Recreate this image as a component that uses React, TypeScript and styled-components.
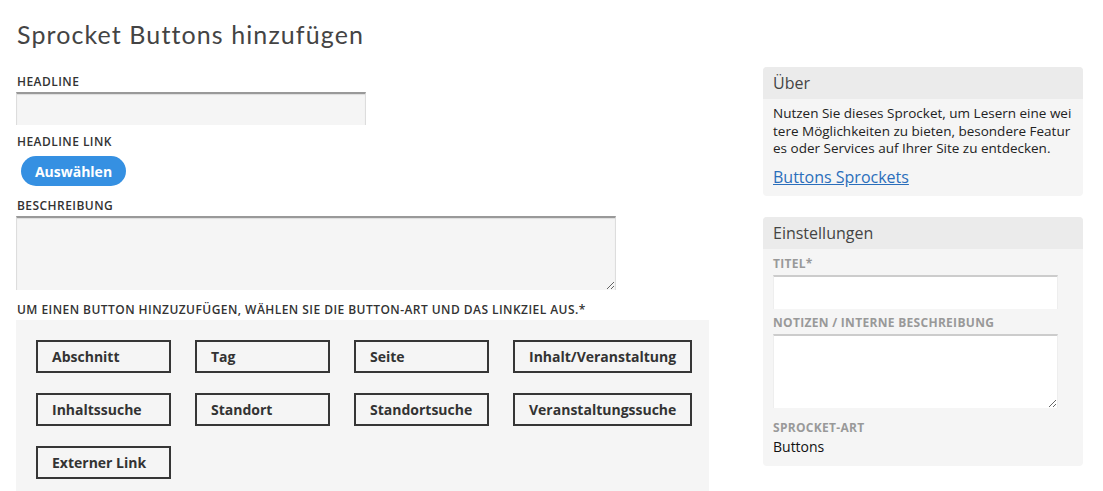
import React from 'react';
import styled, { createGlobalStyle } from 'styled-components';

const GlobalStyle = createGlobalStyle`
  body {
    margin: 0;
    background: #fff;
    font-family: "Open Sans", "Liberation Sans", sans-serif;
    color: #333;
  }
`;

const buttonTypes = [
  'Abschnitt',
  'Tag',
  'Seite',
  'Inhalt/Veranstaltung',
  'Inhaltssuche',
  'Standort',
  'Standortsuche',
  'Veranstaltungssuche',
  'Externer Link',
];

const App = () => {
  return (
    <Page>
      <GlobalStyle />
      <Title>Sprocket Buttons hinzufügen</Title>

      <Columns>
        {/* Formular links */}
        <Main>
          <Label>Headline</Label>
          <TextInput type="text" />

          <Label style={{ marginTop: 9 }}>Headline Link</Label>
          <PickButton>Auswählen</PickButton>

          <Label style={{ marginTop: 12 }}>Beschreibung</Label>
          <TextArea />

          <Label style={{ marginTop: 12 }}>
            Um einen Button hinzuzufügen, wählen Sie die Button-Art und das Linkziel aus.*
          </Label>
          <TypePanel>
            {buttonTypes.map((t) => (
              <TypeButton key={t}>{t}</TypeButton>
            ))}
          </TypePanel>
        </Main>

        {/* Seitenleiste */}
        <Sidebar>
          <Card>
            <CardHeader>Über</CardHeader>
            <CardBody>
              <About>
                Nutzen Sie dieses Sprocket, um Lesern eine weitere Möglichkeiten zu bieten,
                besondere Features oder Services auf Ihrer Site zu entdecken.
              </About>
              <DocLink href="#">Buttons Sprockets</DocLink>
            </CardBody>
          </Card>

          <Card>
            <CardHeader>Einstellungen</CardHeader>
            <SettingsBody>
              <SideLabel>Titel*</SideLabel>
              <SideInput type="text" />
              <SideLabel style={{ marginTop: 6 }}>Notizen / interne Beschreibung</SideLabel>
              <SideTextArea />
              <SideLabel style={{ marginTop: 12, marginBottom: 1 }}>Sprocket-Art</SideLabel>
              <Value>Buttons</Value>
            </SettingsBody>
          </Card>
        </Sidebar>
      </Columns>
    </Page>
  );
};

// 전체 페이지
const Page = styled.div`
  padding: 19px 0 0 16px;
  height: 491px;
  box-sizing: border-box;
  overflow: hidden;
`;

const Title = styled.h1`
  margin: 0 0 18px 1px;
  font-family: Lato, "Liberation Sans", sans-serif;
  font-weight: 400;
  font-size: 25px;
  line-height: 30px;
  color: #444;
  letter-spacing: 1.1px;
`;

const Columns = styled.div`
  display: flex;
  align-items: flex-start;
  gap: 54px;
`;

const Main = styled.div`
  width: 693px;
  display: flex;
  flex-direction: column;
  align-items: flex-start;
  padding-top: 7px;
`;

const Label = styled.div`
  font-size: 12px;
  font-weight: 600;
  line-height: 16px;
  letter-spacing: 0.45px;
  text-transform: uppercase;
  color: #333;
  margin-left: 1px;
  margin-bottom: 2px;
`;

const TextInput = styled.input`
  width: 350px;
  height: 33px;
  box-sizing: border-box;
  background: #f5f5f5;
  border: 1px solid #ddd;
  border-top: 2px solid #999;
  border-bottom: none;
  box-shadow: inset 0 1px 1px #ddd;
  outline: none;
  padding: 4px 8px;
`;

const PickButton = styled.button`
  margin: 4px 0 0 5px;
  width: 105px;
  height: 30px;
  border: none;
  border-radius: 15px;
  background: #3590e2;
  color: #fff;
  font-family: "Open Sans", "Liberation Sans", sans-serif;
  font-weight: 700;
  font-size: 14px;
  cursor: pointer;
`;

const TextArea = styled.textarea`
  width: 600px;
  height: 74px;
  box-sizing: border-box;
  background: #f5f5f5;
  border: 1px solid #ddd;
  border-top: 2px solid #999;
  border-bottom: none;
  box-shadow: inset 0 1px 1px #ddd;
  outline: none;
  resize: both;
`;

const TypePanel = styled.div`
  align-self: stretch;
  display: flex;
  flex-wrap: wrap;
  gap: 20px 24px;
  padding: 20px 16px 20px 20px;
  background: #f5f5f5;
`;

const TypeButton = styled.button`
  min-width: 135px;
  height: 33px;
  box-sizing: border-box;
  padding: 0 14px;
  background: transparent;
  border: 2px solid #363636;
  font-family: "Open Sans", "Liberation Sans", sans-serif;
  font-weight: 700;
  font-size: 14px;
  color: #333;
  text-align: left;
  cursor: pointer;
`;

const Sidebar = styled.div`
  width: 320px;
  display: flex;
  flex-direction: column;
  gap: 21px;
`;

const Card = styled.div`
  background: #f5f5f5;
  border-radius: 4px;
  overflow: hidden;
`;

const CardHeader = styled.div`
  height: 32px;
  line-height: 32px;
  padding: 0 10px;
  background: #ebebeb;
  font-size: 16px;
  color: #444;
`;

const CardBody = styled.div`
  padding: 6px 10px 8px;
`;

const About = styled.p`
  margin: 0 0 8px;
  font-size: 13.5px;
  line-height: 17.5px;
  color: #222;
  word-break: break-all;
`;

const DocLink = styled.a`
  display: block;
  font-size: 16px;
  line-height: 22px;
  color: #2a6ebb;
  text-decoration: underline;
`;

const SettingsBody = styled.div`
  display: flex;
  flex-direction: column;
  align-items: flex-start;
  padding: 7px 10px 10px;
`;

const SideLabel = styled.div`
  font-size: 12px;
  font-weight: 700;
  line-height: 16px;
  letter-spacing: 0.3px;
  text-transform: uppercase;
  color: #999;
  margin-bottom: 3px;
`;

const SideInput = styled.input`
  width: 285px;
  height: 34px;
  box-sizing: border-box;
  background: #fff;
  border: 1px solid #eee;
  border-top: 2px solid #ccc;
  border-bottom: none;
  outline: none;
`;

const SideTextArea = styled.textarea`
  width: 285px;
  height: 74px;
  box-sizing: border-box;
  background: #fff;
  border: 1px solid #eee;
  border-top: 2px solid #ccc;
  border-bottom: none;
  outline: none;
`;

const Value = styled.div`
  font-size: 14px;
  line-height: 19px;
  color: #111;
`;

export default App;
